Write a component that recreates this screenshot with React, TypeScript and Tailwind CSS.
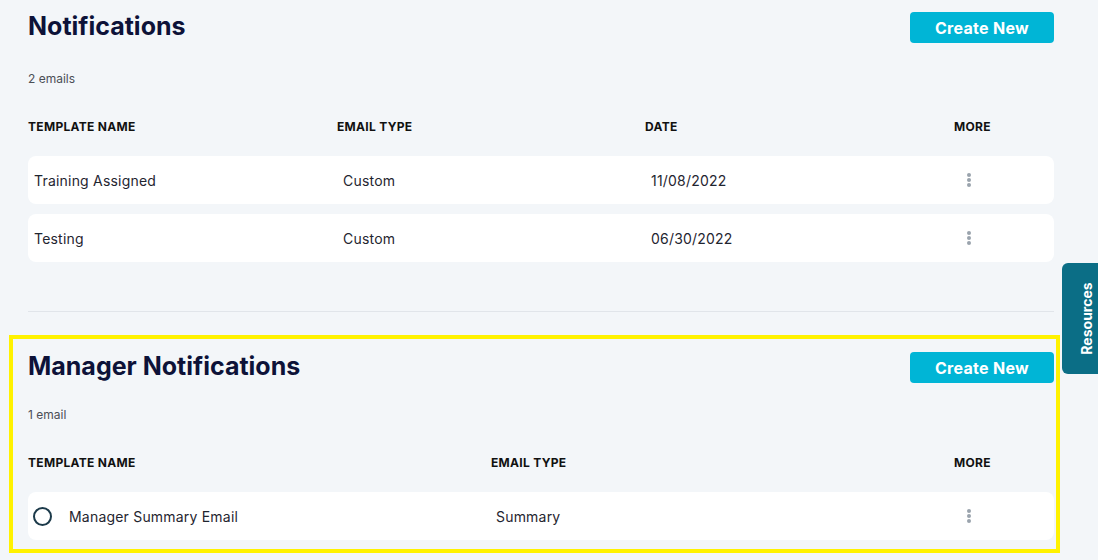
type Row = { name: string; type: string; date: string };

const notifications: Row[] = [
  { name: 'Training Assigned', type: 'Custom', date: '11/08/2022' },
  { name: 'Testing', type: 'Custom', date: '06/30/2022' },
];

function Dots() {
  return (
    <div className="flex w-[4px] flex-col gap-[1px]">
      <span className="block h-[4px] w-[4px] rounded-full bg-[#9aa3ad]" />
      <span className="block h-[4px] w-[4px] rounded-full bg-[#9aa3ad]" />
      <span className="block h-[4px] w-[4px] rounded-full bg-[#9aa3ad]" />
    </div>
  );
}

function SectionHeader({ title }: { title: string }) {
  return (
    <div className="flex items-start justify-between">
      <h1 className="text-[25px] leading-[28px] font-bold text-[#0d1238]">{title}</h1>
      <button className="h-[31px] w-[144px] rounded-[4px] bg-[#00b5d6] text-[16px] font-bold tracking-[0.3px] text-white">
        Create New
      </button>
    </div>
  );
}

const th = 'text-[12px] leading-[16px] font-bold tracking-[0.3px] text-[#111111]';
const td = 'pl-[6px] text-[14px] tracking-[0.2px] text-[#1f2530]';

export default function App() {
  return (
    <div
      className="relative min-h-[560px] overflow-hidden bg-[#f3f6f9] pt-[12px] pr-[44px] pb-[7px] pl-[28px]"
      style={{ fontFamily: 'Inter, "Noto Sans", sans-serif' }}
    >
      {/* Notifications */}
      <section>
        <SectionHeader title="Notifications" />
        <p className="mt-[28px] text-[12px] leading-[16px] text-[#4b4f56]">2 emails</p>
        <div className="mt-[32px] grid grid-cols-[309px_308px_309px_1fr]">
          <span className={th}>TEMPLATE NAME</span>
          <span className={th}>EMAIL TYPE</span>
          <span className={th}>DATE</span>
          <span className={th}>MORE</span>
        </div>
        <div className="mt-[21px] flex flex-col gap-[10px]">
          {notifications.map((row) => (
            <div
              key={row.name}
              className="grid h-[48px] grid-cols-[309px_308px_309px_1fr] items-center rounded-[8px] bg-white"
            >
              <span className={td}>{row.name}</span>
              <span className={td}>{row.type}</span>
              <span className={td}>{row.date}</span>
              <div className="pl-[13px]">
                <Dots />
              </div>
            </div>
          ))}
        </div>
      </section>

      <div className="mt-[49px] h-px bg-[#e1e5ea]" />

      {/* Manager notifications (highlighted) */}
      <section className="mt-[23px] ml-[-19px] mr-[-6px] border-4 border-[#fff200] pt-[13px] pr-[2px] pb-[9px] pl-[15px]">
        <SectionHeader title="Manager Notifications" />
        <p className="mt-[24px] text-[12px] leading-[16px] text-[#4b4f56]">1 email</p>
        <div className="mt-[32px] grid grid-cols-[463px_463px_1fr]">
          <span className={th}>TEMPLATE NAME</span>
          <span className={th}>EMAIL TYPE</span>
          <span className={th}>MORE</span>
        </div>
        <div className="mt-[21px] grid h-[48px] grid-cols-[463px_463px_1fr] items-center rounded-[8px] bg-white">
          <div className="flex items-center pl-[5px]">
            <span className="block h-[19px] w-[19px] rounded-full border-[2.5px] border-[#1c3a4a]" />
            <span className="ml-[17px] text-[14px] tracking-[0.2px] text-[#1f2530]">Manager Summary Email</span>
          </div>
          <span className="pl-[5px] text-[14px] tracking-[0.2px] text-[#1f2530]">Summary</span>
          <div className="pl-[13px]">
            <Dots />
          </div>
        </div>
      </section>

      {/* Resources tab */}
      <div className="absolute top-[263px] right-[-12px] flex h-[111px] w-[48px] items-center justify-center rounded-l-[6px] bg-[#0b6e86]">
        <span className="-rotate-90 whitespace-nowrap text-[14px] font-bold text-white">Resources</span>
      </div>
    </div>
  );
}
